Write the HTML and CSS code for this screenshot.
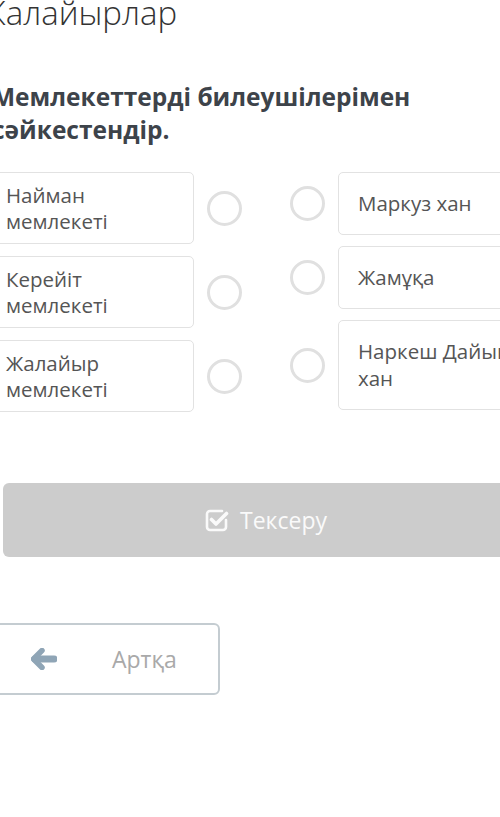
FILE: index.html
```html
<!DOCTYPE html>
<html lang="kk">

<head>
    <meta charset="UTF-8">
    <meta name="viewport" content="width=device-width, initial-scale=1.0">
    <title>Жалайырлар</title>
    <link rel="stylesheet" href="styles.css">
</head>

<body>
    <div class="page">
        <h1 class="title">Жалайырлар</h1>
        <h2 class="question">Мемлекеттерді билеушілерімен сәйкестендір.</h2>

        <div class="match">
            <div class="col left">
                <div class="row">
                    <div class="card">Найман мемлекеті</div>
                    <span class="dot"></span>
                </div>
                <div class="row">
                    <div class="card">Керейіт мемлекеті</div>
                    <span class="dot"></span>
                </div>
                <div class="row">
                    <div class="card">Жалайыр мемлекеті</div>
                    <span class="dot"></span>
                </div>
            </div>
            <div class="col right">
                <div class="row">
                    <span class="dot"></span>
                    <div class="card">Маркуз хан</div>
                </div>
                <div class="row">
                    <span class="dot"></span>
                    <div class="card">Жамұқа</div>
                </div>
                <div class="row">
                    <span class="dot"></span>
                    <div class="card">Наркеш Дайын хан</div>
                </div>
            </div>
        </div>

        <button class="check" type="button">
            <svg width="24" height="24" viewBox="0 0 24 24">
                <path d="M17 3H5a3 3 0 0 0-3 3v13a3 3 0 0 0 3 3h13a3 3 0 0 0 3-3v-7" fill="none" stroke="#fafafa" stroke-width="2.6" stroke-linecap="round"/>
                <path d="M6.5 11.5l4.5 4.5 10.5-10.5" fill="none" stroke="#fafafa" stroke-width="3.6" stroke-linecap="round" stroke-linejoin="round"/>
            </svg>
            Тексеру
        </button>

        <button class="back" type="button">
            <svg width="26" height="22" viewBox="0 0 26 22">
                <path d="M11 2.5L2.5 11l8.5 8.5" fill="none" stroke="#8fa5b6" stroke-width="5.5" stroke-linecap="round" stroke-linejoin="round"/>
                <path d="M4 11h19" fill="none" stroke="#8fa5b6" stroke-width="7" stroke-linecap="round"/>
            </svg>
            <span>Артқа</span>
        </button>
    </div>
</body>

</html>
```

FILE: styles.css
```css
body {
    margin: 0;
    font-family: "Open Sans", "Noto Sans", sans-serif;
    background-color: #fff;
    overflow: hidden;
}

.page {
    margin-left: -10px;
    width: 560px;
}

.title {
    margin: -8px 0 0 -10px;
    font-size: 33px;
    font-weight: 300;
    line-height: 42px;
    color: #333;
}

.question {
    margin: 46px 0 0 2px;
    width: 460px;
    font-size: 24.5px;
    font-weight: 700;
    line-height: 33px;
    color: #3d434a;
}

.match {
    display: flex;
    margin-top: 26px;
    gap: 48px;
}

.col {
    display: flex;
    flex-direction: column;
}

.left {
    gap: 12px;
}

.right {
    gap: 11px;
}

.row {
    display: flex;
    align-items: center;
    gap: 13px;
}

.card {
    box-sizing: border-box;
    border: 1px solid #e2e2e2;
    border-radius: 5px;
    font-size: 20.5px;
    line-height: 26px;
    color: #555;
}

.left .card {
    width: 204px;
    padding: 9px 15px;
}

.right .card {
    width: 200px;
    padding: 17px 19px;
    line-height: 27px;
}

.dot {
    box-sizing: border-box;
    width: 35px;
    height: 35px;
    border: 3px solid #e0e0e0;
    border-radius: 50%;
}

.check {
    display: flex;
    align-items: center;
    justify-content: center;
    gap: 11px;
    margin: 71px 0 0 13px;
    width: 526px;
    height: 74px;
    border: none;
    border-radius: 6px;
    background-color: #cccccc;
    font-family: inherit;
    font-size: 23px;
    color: #fafafa;
}

.back {
    display: flex;
    align-items: center;
    margin-top: 66px;
    width: 230px;
    height: 72px;
    padding: 0 0 0 39px;
    border: 2px solid #c4ccd1;
    border-radius: 6px;
    background-color: #fff;
    font-family: inherit;
    font-size: 23px;
    color: #a9a9a9;
}

.back span {
    margin-left: 55px;
}
```
